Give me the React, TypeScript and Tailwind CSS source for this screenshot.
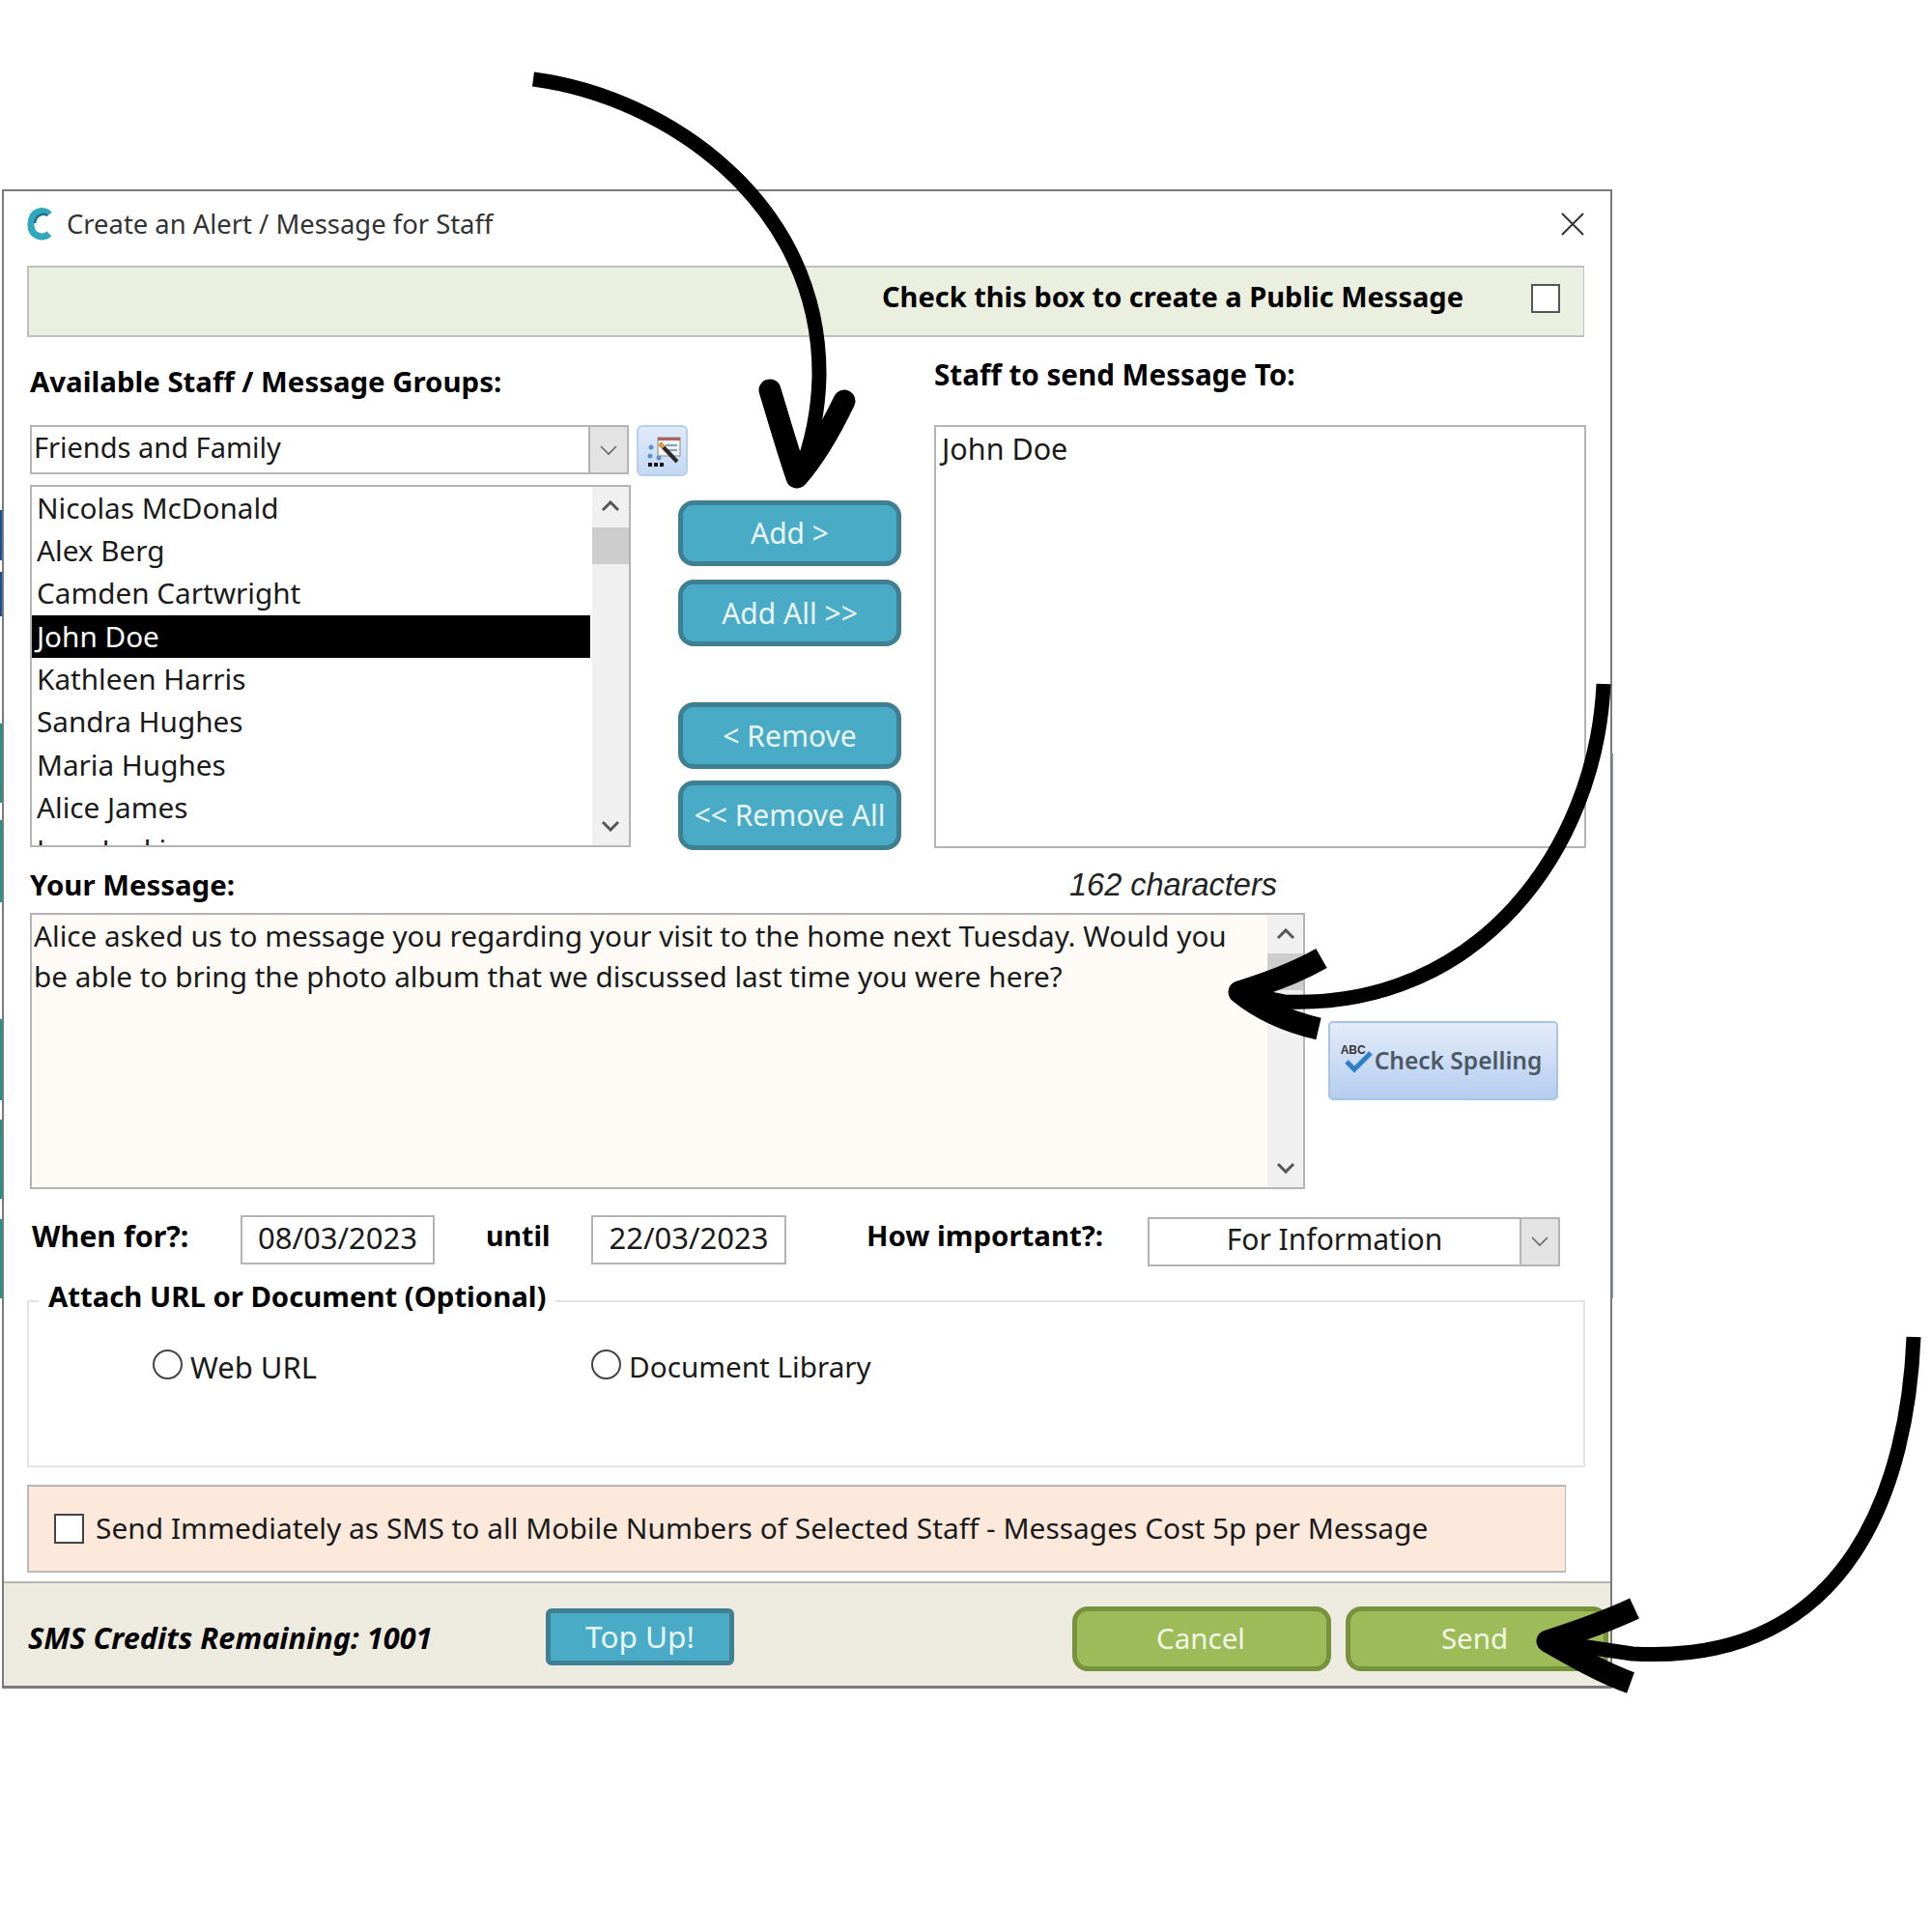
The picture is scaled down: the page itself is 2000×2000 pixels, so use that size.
import React from 'react';

const staff = ['Nicolas McDonald', 'Alex Berg', 'Camden Cartwright', 'John Doe', 'Kathleen Harris', 'Sandra Hughes', 'Maria Hughes', 'Alice James', 'Jane Jenkins'];

// bits of the window behind the dialog, showing past its left edge
const behindLeft = [
  'top-[528px] h-[52px] bg-[#1f4e8c]',
  'top-[592px] h-[46px] bg-[#1f4e8c]',
  'top-[749px] h-[82px] bg-[#1f9488]',
  'top-[849px] h-[85px] bg-[#1f9488]',
  'top-[1055px] h-[84px] bg-[#1f9488]',
  'top-[1159px] h-[82px] bg-[#1f9488]',
  'top-[1262px] h-[82px] bg-[#1f9488]',
];

const Chevron: React.FC<{ up?: boolean; thick?: boolean }> = ({ up, thick }) => (
  <svg width="20" height="12" viewBox="0 0 20 12" fill="none" stroke={thick ? '#555555' : '#666666'} strokeWidth={thick ? 3 : 1.6}>
    <path d={up ? 'M2 10 L10 2 L18 10' : 'M2 2 L10 10 L18 2'} />
  </svg>
);

const ScrollBar: React.FC<{ thumbTop: number; thumbHeight: number; className: string }> = ({ thumbTop, thumbHeight, className }) => (
  <div className={`relative flex flex-col items-center justify-between bg-[#f0f0f0] py-[14px] ${className}`}>
    <Chevron up thick />
    <div className="absolute left-0 right-0 bg-[#cdcdcd]" style={{ top: thumbTop, height: thumbHeight }} />
    <Chevron thick />
  </div>
);

const ComboArrow = () => (
  <div className="flex h-full w-[40px] shrink-0 items-center justify-center border-l-2 border-[#b4b4b4] bg-[#e3e3e3]">
    <Chevron />
  </div>
);

const TealButton: React.FC<{ label: string; className: string }> = ({ label, className }) => (
  <button className={`flex w-[231px] items-center justify-center rounded-[16px] border-[5px] border-[#3f7f92] bg-[#4aabc6] pb-[1px] text-[30px] text-[#e9f6fa] ${className}`}>{label}</button>
);

const GreenButton: React.FC<{ label: string; className: string }> = ({ label, className }) => (
  <button className={`mt-[4px] flex h-[67px] items-center justify-center rounded-[16px] border-[5px] border-[#76923c] bg-[#9dbb59] text-[29.5px] text-[#f3f8e6] ${className}`}>{label}</button>
);

const Radio: React.FC<{ label: string; className: string; textClass: string }> = ({ label, className, textClass }) => (
  <div className={`flex items-center ${className}`}>
    <div className="-mt-[6px] h-[31px] w-[31px] rounded-full border-2 border-[#444444] bg-white" />
    <span className={`ml-[8px] ${textClass}`}>{label}</span>
  </div>
);

const Arrows = () => (
  <svg className="pointer-events-none absolute left-0 top-0" width="2000" height="2000" viewBox="0 0 2000 2000" fill="none" stroke="#000000" strokeLinecap="round" strokeLinejoin="round">
    <path d="M552 82 C690 100 850 210 848 390 C847 430 838 465 828 490" strokeWidth="15" strokeLinecap="butt" />
    <path d="M797 404 C808 440 815 465 825 494 C846 470 862 440 874 415" strokeWidth="23" />
    <path d="M1660 708 C1652 880 1530 1045 1330 1037 L1282 1027" strokeWidth="15" strokeLinecap="butt" />
    <path d="M1368 992 C1340 1008 1310 1018 1283 1027 C1305 1045 1335 1058 1365 1065" strokeWidth="23" strokeLinecap="butt" />
    <path d="M1981 1384 C1975 1530 1920 1725 1690 1712 L1602 1699" strokeWidth="15" strokeLinecap="butt" />
    <path d="M1692 1665 C1660 1680 1630 1690 1602 1699 C1630 1715 1660 1732 1688 1742" strokeWidth="23" strokeLinecap="butt" />
  </svg>
);

export default function App() {
  return (
    <div className="relative h-[2000px] w-[2000px] overflow-hidden bg-white pl-[2px] pt-[196px] font-['Noto_Sans',sans-serif] text-[29.7px] text-[#1a1a1a]">
      {behindLeft.map(cls => (
        <div key={cls} className={`absolute left-0 w-[2px] ${cls}`} />
      ))}
      <div className="absolute left-[1669px] top-[780px] h-[564px] w-[1px] bg-[#7fb3b3]" />

      <div className="flex h-[1552px] w-[1667px] flex-col border-2 border-b-[3px] border-[#7a7a7a] bg-white">
        {/* title bar */}
        <div className="flex h-[77px] shrink-0 items-center pb-[9px] pl-[24px] pr-[27px]">
          <svg width="26" height="34" viewBox="0 0 26 34" fill="none">
            <path d="M23 7 C18 1 5 2 4 16 C3 30 17 33 23 27" stroke="#2fa8bd" strokeWidth="7" />
            <path d="M21 8 C16 5 9 8 8 16" stroke="#1d6f8a" strokeWidth="2.5" />
          </svg>
          <span className="ml-[15px] text-[27.4px] text-[#333333]">Create an Alert / Message for Staff</span>
          <svg className="ml-auto" width="24" height="24" viewBox="0 0 24 24" stroke="#333333" strokeWidth="2">
            <path d="M1 1 L23 23 M23 1 L1 23" />
          </svg>
        </div>

        {/* public message bar */}
        <div className="ml-[24px] flex h-[74px] w-[1612px] shrink-0 items-center justify-end border-2 border-r border-[#c0c0c0] bg-[#ebefdf] pb-[7px] pr-[24px]">
          <span className="-mt-[4px] text-[29px] font-bold text-black">Check this box to create a Public Message</span>
          <div className="ml-[70px] h-[30px] w-[30px] border-2 border-[#555555] bg-white" />
        </div>

        {/* staff pickers */}
        <div className="ml-[27px] flex shrink-0">
          <div className="w-[902px]">
            <div className="flex h-[91px] items-center pt-[2px] text-[29.4px] font-bold text-black">Available Staff / Message Groups:</div>
            <div className="flex items-start">
              <div className="flex h-[51px] w-[620px] items-center justify-between border-2 border-[#b4b4b4] bg-white">
                <span className="-mt-[5px] pl-[2px] text-[29px]">Friends and Family</span>
                <ComboArrow />
              </div>
              <div className="ml-[8px] flex h-[53px] w-[53px] items-center justify-center rounded-[6px] border-2 border-[#b5cfee] bg-gradient-to-b from-[#e0ebf9] to-[#c3d8f3]">
                <svg width="49" height="49" viewBox="0 0 49 49">
                  <rect x="20" y="11" width="23" height="19" fill="#f4f4f4" stroke="#8a8a8a" />
                  <rect x="20" y="11" width="23" height="3" fill="#b0605a" />
                  <path d="M28 19 H40 M31 24 H40" stroke="#5a86b5" strokeWidth="1.5" />
                  <path d="M22 17 L40 36" stroke="#2a2a2a" strokeWidth="4" />
                  <path d="M22 17 L26 21" stroke="#e0a030" strokeWidth="4" />
                  <circle cx="13" cy="21" r="2.5" fill="#5b8fc7" />
                  <circle cx="12" cy="30" r="2.5" fill="#5b8fc7" />
                  <circle cx="21" cy="32" r="2.5" fill="#5b8fc7" />
                  <path d="M10 37 h4 v4 h-4 z M16 37 h4 v4 h-4 z M22 37 h4 v4 h-4 z" fill="#111111" />
                </svg>
              </div>
            </div>
            <div className="mt-[9px] flex">
              <div className="flex h-[375px] w-[622px] overflow-hidden border-2 border-[#b4b4b4] bg-white">
                <div className="flex-1 overflow-hidden pr-[2px]">
                  {staff.map(name => (
                    <div key={name} className={`flex h-[44.3px] items-center pl-[5px] ${name === 'John Doe' ? 'bg-black text-white' : ''}`}>{name}</div>
                  ))}
                </div>
                <ScrollBar className="w-[38px]" thumbTop={42} thumbHeight={38} />
              </div>
              <div className="ml-[49px] flex flex-col pt-[16px]">
                <TealButton label="Add >" className="h-[68px]" />
                <TealButton label="Add All >>" className="mt-[14px] h-[69px]" />
                <TealButton label="< Remove" className="mt-[58px] h-[69px]" />
                <TealButton label="<< Remove All" className="mt-[12px] h-[72px]" />
              </div>
            </div>
          </div>
          <div className="ml-[34px] w-[675px]">
            <div className="flex h-[78px] items-center text-[29.6px] font-bold text-black">Staff to send Message To:</div>
            <div className="mt-[13px] h-[438px] border-2 border-[#b4b4b4] pl-[6px] text-[30.5px]">John Doe</div>
          </div>
        </div>

        {/* message */}
        <div className="ml-[27px] mt-[16px] flex h-[40px] shrink-0 items-center">
          <span className="w-[1076px] text-[29.4px] font-bold text-black">Your Message:</span>
          <span className="font-['Liberation_Sans',sans-serif] text-[32.5px] italic text-[#222222]">162 characters</span>
        </div>
        <div className="ml-[27px] mt-[9px] flex shrink-0 items-start">
          <div className="flex h-[286px] w-[1320px] border-2 border-[#b4b4b4] bg-[#fefaf6]">
            <p className="flex-1 pl-[2px] pt-[1px] leading-[42px]">Alice asked us to message you regarding your visit to the home next Tuesday. Would you be able to bring the photo album that we discussed last time you were here?</p>
            <ScrollBar className="w-[37px]" thumbTop={40} thumbHeight={38} />
          </div>
          <button className="ml-[24px] mt-[112px] flex h-[82px] w-[238px] items-center justify-center rounded-[5px] border-2 border-[#a6c4e6] bg-gradient-to-b from-[#e3ecf9] to-[#b5cdee] pr-[4px] text-[24.5px] font-semibold text-[#4b5866]">
            <span className="relative h-[34px] w-[34px]">
              <span className="absolute left-0 top-0 font-['Liberation_Sans',sans-serif] text-[12px] font-bold leading-none text-[#333333]">ABC</span>
              <svg className="absolute left-0 top-0" width="34" height="34" viewBox="0 0 34 34" fill="none">
                <path d="M6 18 L14 26 L31 9" stroke="#2f7fc9" strokeWidth="5" />
              </svg>
            </span>
            <span className="ml-[1px]">Check Spelling</span>
          </button>
        </div>

        {/* dates */}
        <div className="ml-[29px] mt-[26px] flex h-[53px] shrink-0 items-center">
          <span className="-mt-[8px] w-[216px] text-[30.4px] font-bold text-black">When for?:</span>
          <div className="flex h-[51px] w-[201px] items-center justify-center border-2 border-[#b4b4b4] pb-[4px] text-[31px]">08/03/2023</div>
          <span className="-mt-[8px] ml-[53px] w-[109px] text-[28.5px] font-bold text-black">until</span>
          <div className="flex h-[51px] w-[202px] items-center justify-center border-2 border-[#b4b4b4] pb-[4px] text-[31px]">22/03/2023</div>
          <span className="-mt-[8px] ml-[83px] w-[291px] text-[29.4px] font-bold text-black">How important?:</span>
          <div className="mt-[3px] flex h-[51px] w-[427px] items-center border-2 border-[#b4b4b4]">
            <span className="-mt-[6px] flex-1 text-center text-[30px]">For Information</span>
            <ComboArrow />
          </div>
        </div>

        {/* attachment group */}
        <div className="relative ml-[24px] mt-[36px] h-[173px] w-[1613px] shrink-0 border-2 border-[#e4e4e4]">
          <span className="absolute -top-[27px] left-[10px] bg-white px-[10px] text-[29.3px] font-bold text-black">Attach URL or Document (Optional)</span>
          <div className="flex pl-[128px] pt-[44px]">
            <Radio label="Web URL" className="w-[454px]" textClass="text-[31px]" />
            <Radio label="Document Library" className="" textClass="text-[29.7px]" />
          </div>
        </div>

        {/* sms */}
        <div className="ml-[24px] mt-[18px] flex h-[91px] w-[1593px] shrink-0 items-center border-2 border-r border-[#b9b9b9] bg-[#fde9db] pl-[26px]">
          <div className="h-[31px] w-[31px] border-2 border-[#444444] bg-white" />
          <span className="ml-[12px] text-[29.9px]">Send Immediately as SMS to all Mobile Numbers of Selected Staff - Messages Cost 5p per Message</span>
        </div>

        {/* footer */}
        <div className="mt-[9px] flex min-h-0 flex-1 items-center border-t-2 border-[#b5b5b5] bg-[#edeae0] pl-[25px] pt-[5px]">
          <span className="mt-[2px] w-[536px] text-[30.7px] font-bold italic text-black">SMS Credits Remaining: 1001</span>
          <button className="h-[59px] w-[195px] rounded-[6px] border-[5px] border-[#3f7f92] bg-[#4aabc6] pb-[3px] text-[31.5px] text-[#e9f6fa]">Top Up!</button>
          <GreenButton label="Cancel" className="ml-[350px] w-[268px] pr-[2px]" />
          <GreenButton label="Send" className="ml-[15px] w-[272px] pr-[5px]" />
        </div>
      </div>
      <Arrows />
    </div>
  );
}
